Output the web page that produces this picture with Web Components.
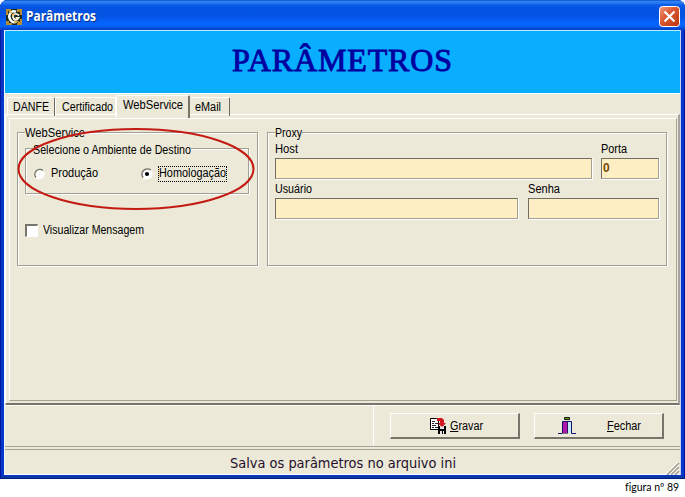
<!DOCTYPE html>
<html lang="pt-BR">
<head>
<meta charset="utf-8">
<title>Parâmetros</title>
<style>
body{margin:0;background:#fff;overflow:hidden;font:12px/13px "Liberation Sans",Arial,sans-serif;color:#000}
</style>
</head>
<body>
<param-app></param-app>
<script>
function define(name, html, setup) {
  const t = document.createElement('template');
  t.innerHTML = html;
  customElements.define(name, class extends HTMLElement {
    constructor() {
      super();
      this.attachShadow({mode: 'open'}).append(t.content.cloneNode(true));
    }
    connectedCallback() { if (setup) setup(this, this.shadowRoot); }
  });
}

/* Text run condensed or tracked out to a given width (attribute w). */
define('fit-text', `<style>:host{display:block;white-space:nowrap;width:max-content}span{display:inline-block;transform-origin:0 0}</style><span><slot></slot></span>`,
  (host, root) => {
    const w = +host.getAttribute('w'), s = root.querySelector('span');
    const now = s.getBoundingClientRect().width;
    if (now > w) s.style.transform = `scaleX(${w / now})`;
    else s.style.letterSpacing = (w - now) / host.textContent.length + 'px';
    host.style.width = w + 'px';
  });

define('title-bar', `<style>
:host{display:flex;align-items:center;box-sizing:border-box;height:30px;padding:3px 6px 0 6px;border-radius:7px 7px 0 0;
background:linear-gradient(#0a50c8 0,#2f82f4 1.5px,#2a78f0 3px,#0a5be8 5px,#0353e0 9px,#0455e6 17px,#0563fb 22px,#0564fb 26px,#0450dc 28px,#033cc0 30px);
color:#fff;font:bold 13.5px/18px "Open Sans",sans-serif;text-shadow:1px 1px 0 #0a3080}
fit-text{margin:-1px 0 0 4px;flex:1}
.x{display:block;width:21px;height:21px;margin-right:-1px}
</style>
<svg width="16" height="16" viewBox="0 0 16 16"><rect width="16" height="16" fill="#182c20"/><path d="M0 0h5v2H2v4H0zM11 0h5v6h-2V3h-3zM0 12h3v2h3v2H0zM14 10h2v6h-5v-2h3z" fill="#b98c2c"/><path d="M10 2.8C6.500 1 2.800 4 3.300 8s4 6.500 7.200 4.500" fill="none" stroke="#fff" stroke-width="2.600"/><path d="M13 6.500C10 3.500 6.500 5 7 8s3.500 4 5.500 1H9.500" fill="none" stroke="#f6f0dc" stroke-width="1.800"/><path d="M3 2l3 2M6 6l2-1M11 12l3 2M8 13h3" stroke="#e0aa32" stroke-width="1.500"/></svg>
<fit-text w="70"><slot></slot></fit-text>
<svg class="x" viewBox="0 0 21 21"><defs><linearGradient id="g" x2="1" y2="1"><stop stop-color="#f09a80"/><stop offset=".4" stop-color="#de5a36"/><stop offset="1" stop-color="#b8320c"/></linearGradient></defs><rect x=".5" y=".5" width="20" height="20" rx="3" fill="url(#g)" stroke="#fff"/><path d="M5.500 5.500l10 10M15.500 5.500l-10 10" stroke="#fff" stroke-width="2.200"/></svg>`,
  (h, r) => {
    const s = r.querySelector('fit-text').shadowRoot.querySelector('span');
    s.style.cssText = '';
    const now = s.getBoundingClientRect().width;
    if (now > 0) s.style.transform = `scaleX(${70 / now})`;
  });

define('page-banner', `<style>
:host{display:flex;justify-content:center;box-sizing:border-box;height:64px;border-top:1px solid #b8f0ff;border-bottom:1px solid #fff;background:#0aaeff;
color:#0000a0;font:32px/38px "Liberation Serif",serif;-webkit-text-stroke:.9px #0000a0;padding:10px 0 0 0}
</style><slot></slot>`);

define('tab-item', `<style>
:host{display:block;box-sizing:border-box;height:19px;padding:3px 0 0 6px;border-top:1px solid #fff;border-left:1px solid #fff;border-radius:2px 2px 0 0;border-right:1px solid #6c6a5c}
:host([last]){border-left:0}
:host([plain]){border-right-color:#fff}
:host([active]){height:23px;margin-top:-2px;padding-top:3px;background:#ece9d8;border-right:2px solid #77756a;z-index:1}
</style><slot></slot>`);

define('group-box', `<style>
:host{display:block;box-sizing:border-box;border:1px solid #a09f92;box-shadow:1px 1px 0 #fff,inset 1px 1px 0 #fff}
.l{margin:var(--legend-top,-6px) 0 0 7px;background:#ece9d8;width:max-content;height:13px}
</style><div class="l"><slot name="legend"></slot></div><slot></slot>`);

define('text-field', `<style>
:host{display:block}
.f{box-sizing:border-box;height:21px;margin-top:2px;background:#feeec3;border:1px solid #a3a092;border-top:1px solid #716f64;border-left:1px solid #716f64;box-shadow:1px 1px 0 #fff;padding:3px 1px;font-weight:bold;color:#754b08}
.l{height:13px}
</style><div class="l"><slot name="label"></slot></div><div class="f"><slot></slot></div>`);

define('radio-item', `<style>
:host{display:flex;align-items:center;height:16px;gap:4px}
svg{display:block}.d{display:none}:host([checked]) .d{display:block}
.t{border:1px solid transparent;height:14px;line-height:13px;margin-top:-1px}
:host([checked]) .t{border:1px dotted #000}
</style><svg width="13" height="13" viewBox="0 0 13 13"><circle cx="6" cy="6" r="5" fill="#fff"/><path d="M2.200 9.800A5.400 5.400 0 0 1 9.800 2.200" fill="none" stroke="#77756a" stroke-width="1.500"/><path d="M2.200 9.800A5.400 5.400 0 0 0 9.800 2.200" fill="none" stroke="#fff" stroke-width="1.200"/><circle class="d" cx="6" cy="6" r="2.100"/></svg><div class="t"><slot></slot></div>`);

define('check-item', `<style>
:host{display:flex;align-items:center;gap:5px}
i{box-sizing:border-box;width:13px;height:13px;background:#fff;border:1px solid #fff;border-top:2px solid #77756a;border-left:2px solid #77756a}
</style><i></i><slot></slot>`);

define('push-button', `<style>
:host{display:flex;box-sizing:border-box;width:130px;height:26px;border:1px solid #fff;border-right:2px solid #77756a;border-bottom:2px solid #77756a}
::slotted(svg){display:block;flex:none}
</style><slot></slot>`);

define('status-bar', `<style>
:host{display:flex;box-sizing:border-box;height:26px;border-top:1px solid #a3a092;border-bottom:1px solid #fff;color:#24102c;font:14.500px/18px "DejaVu Sans Condensed","DejaVu Sans",sans-serif;padding:4px 0 0 225px;justify-content:space-between}
svg{margin-top:7px;flex:none}
</style><slot></slot><svg width="15" height="14"><path d="M2 14L14 2M6 14l8-8M10 14l4-4" stroke="#a5a294" stroke-width="1.700"/><path d="M1 13L13 1M5 13l9-9M9 13l5-5" stroke="#fff"/></svg>`);

define('red-oval', `<style>:host{position:absolute;left:16px;top:126px;width:240px;height:86px;pointer-events:none}svg{display:block}</style>
<svg width="240" height="86"><ellipse cx="120" cy="43" rx="117.500" ry="40" fill="none" stroke="#c31a12" stroke-width="2"/></svg>`);

define('param-app', `<style>
:host{display:block;position:relative;width:685px;height:497px}
.win{box-sizing:border-box;height:479px;background:#0737c8;border-radius:8px 8px 0 0;border-bottom:1px solid #001f80;box-shadow:inset 1px 0 #0018a0,inset -1px 0 #0010a0,inset 0 -2px #0a3aa0}
.body{box-sizing:border-box;height:445px;margin:0 4px;background:#ece9d8;border-left:1px solid #eefaff;border-right:1px solid #c6cff0}
.tabs{display:flex;height:19px;padding:3px 0 0 2px;align-items:flex-start}
.page{box-sizing:border-box;height:291px;margin-top:-2px;border-top:1px solid #fff;border-left:1px solid #fff;border-right:2px solid #a5a3a0;border-bottom:2px solid #77756a;padding:3px 1px 3px 3px}
.sheet{box-sizing:border-box;height:283px;border-top:1px solid #fff;border-left:1px solid #fff;border-right:1px solid #a5a294;border-bottom:1px solid #a5a294;display:grid;grid-template-columns:241px 400px;gap:9px;padding:13px 0 0 7px;align-items:start}
.sheet>group-box{height:134px}
.inner{height:46px;width:224px;margin:8px 0 0 7px;--legend-top:-5px}
.radios{display:flex;margin:9px 0 0 8px;gap:42px}
check-item{margin:30px 0 0 7px}
.row{display:flex;gap:9px;margin:3px 0 0 7px}
.row+.row{margin-top:4px;gap:10px}
.foot{display:flex;box-sizing:border-box;height:42px;border-top:1px solid #fff;border-bottom:1px solid #a5a294;margin-bottom:2px}
.acts{display:flex;box-sizing:border-box;margin-left:368px;flex:1;border-left:1px solid #fff;padding:7px 0 0 16px;gap:14px}
.cap{display:flex;justify-content:flex-end;padding:2px 6px 0 0;font:10.500px/13px Lato,sans-serif}
</style>
<div class="win">
<title-bar>Parâmetros</title-bar>
<div class="body">
<page-banner><fit-text w="221">PARÂMETROS</fit-text></page-banner>
<div class="tabs">
<tab-item style="width:48px;padding-left:5px"><fit-text w="36">DANFE</fit-text></tab-item>
<tab-item plain style="width:61px"><fit-text w="51">Certificado</fit-text></tab-item>
<tab-item active style="width:74px"><fit-text w="60">WebService</fit-text></tab-item>
<tab-item last style="width:40px;padding-left:5px"><fit-text w="26">eMail</fit-text></tab-item>
</div>
<div class="page"><div class="sheet">
<group-box><fit-text slot="legend" w="60">WebService</fit-text>
<group-box class="inner"><fit-text slot="legend" w="158">Selecione o Ambiente de Destino</fit-text>
<div class="radios"><radio-item style="width:65px"><fit-text w="47">Produção</fit-text></radio-item><radio-item checked><fit-text w="67">Homologação</fit-text></radio-item></div>
</group-box>
<check-item><fit-text w="101">Visualizar Mensagem</fit-text></check-item>
</group-box>
<group-box><fit-text slot="legend" w="27">Proxy</fit-text>
<div class="row"><text-field style="width:317px"><fit-text slot="label" w="23">Host</fit-text></text-field><text-field style="width:58px"><fit-text slot="label" w="26">Porta</fit-text>0</text-field></div>
<div class="row"><text-field style="width:243px"><fit-text slot="label" w="37">Usuário</fit-text></text-field><text-field style="width:131px"><fit-text slot="label" w="32">Senha</fit-text></text-field></div>
</group-box>
</div></div>
<div class="foot"><div class="acts">
<push-button><svg width="18" height="18" viewBox="0 0 18 18" style="margin:3px 3px 0 38px"><path d="M1.500 1.500h6l2 2v9h-8z" fill="#fff" stroke="#000"/><path d="M3 4.500h3M3 6.500h2M6 6.500h3M3 8.500h4M3 10.500h2M6 10.500h3" stroke="#222"/><path d="M8 1h5l2 2v3h2l-4 4-4-4h2V4H8z" fill="#d01820"/><path d="M9 9h8v8H9z" fill="#000"/><path d="M11 9h4v3h-4zM11 14h2v3h-2zM14 14h1v3h-1z" fill="#e4e4e4"/><path d="M13 10l-3-3h6z" fill="#d01820"/></svg><fit-text w="33" style="margin-top:6px"><u>G</u>ravar</fit-text></push-button>
<push-button><svg width="18" height="18" viewBox="0 0 18 18" style="margin:3px 31px 0 23px"><path d="M6.500 .500h5v2h-5z" fill="#70b020" stroke="#111"/><path d="M0 16.500h4.500V4.500h9v12H18" fill="none" stroke="#10106c"/><path d="M9 5h4v11H9z" fill="#c2ecfa"/><path d="M5 5h4v11l-4 1z" fill="#b018ac"/><path d="M9.500 5v11" stroke="#301060"/><path d="M4 16h6v1H4z" fill="#777"/></svg><fit-text w="34" style="margin-top:6px"><u>F</u>echar</fit-text></push-button>
</div></div>
<status-bar><fit-text w="226">Salva os parâmetros no arquivo ini</fit-text></status-bar>
</div></div>
<div class="cap"><fit-text w="54">figura nº 89</fit-text></div>
<red-oval></red-oval>`);
</script>
</body>
</html>
